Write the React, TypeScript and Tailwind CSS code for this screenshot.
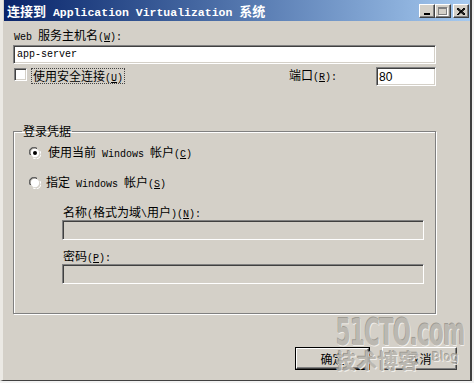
import React from 'react';

const latinCls = "font-['Liberation_Mono',monospace] text-[10px]";
const titleLatinCls = "font-['Liberation_Mono',monospace] text-[11.5px] font-bold";

// splits a label into CJK and latin runs; "&X" underlines X (accelerator key)
function Txt({ s, latin = latinCls }: { s: string; latin?: string }) {
  const parts = s.split(/([\x20-\x7e]+)/).filter(Boolean);
  return (
    <>
      {parts.map((p, i) => {
        if (!/^[\x20-\x7e]+$/.test(p)) return <span key={i}>{p}</span>;
        const bits = p.split(/&(.)/);
        return (
          <span key={i} className={latin + ' whitespace-pre'}>
            {bits.map((b, j) => (j % 2 ? <span key={j} className="underline">{b}</span> : b))}
          </span>
        );
      })}
    </>
  );
}

const sunken =
  'border border-t-[#808080] border-l-[#808080] border-b-white border-r-white shadow-[inset_1px_1px_0_#404040,inset_-1px_-1px_0_#d4d0c8]';

function Radio({ checked }: { checked?: boolean }) {
  return (
    <svg width="12" height="12" viewBox="0 0 12 12" className="shrink-0">
      <path d="M1 8 A5 5 0 0 1 8 1" fill="none" stroke="#808080" strokeWidth="1" />
      <path d="M2 8 A4 4 0 0 1 8 2" fill="none" stroke="#404040" strokeWidth="1" />
      <circle cx="6" cy="6" r="4.2" fill="#fff" />
      <path d="M4 11 A5 5 0 0 0 11 4" fill="none" stroke="#fff" strokeWidth="1" />
      {checked && <circle cx="6" cy="6" r="2" fill="#000" />}
    </svg>
  );
}

function CaptionBtn({ children }: { children: React.ReactNode }) {
  return (
    <div className="w-[16px] h-[14px] bg-[#d4d0c8] border border-t-white border-l-white border-b-[#404040] border-r-[#404040] shadow-[inset_-1px_-1px_0_#808080] flex items-center justify-center">
      {children}
    </div>
  );
}

function Button({ label, isDefault }: { label: string; isDefault?: boolean }) {
  return (
    <div
      className={
        isDefault
          ? 'w-[75px] h-[23px] border border-black bg-[#d4d0c8] flex'
          : 'w-[75px] h-[23px] bg-[#d4d0c8] flex'
      }
    >
      <div className="flex-1 flex items-center justify-center border border-t-white border-l-white border-b-[#404040] border-r-[#404040] shadow-[inset_-1px_-1px_0_#808080]">
        {label}
      </div>
    </div>
  );
}

export default function App() {
  return (
    <div className="w-[474px] h-[383px] bg-[#f2f2f2] relative overflow-hidden font-['Noto_Sans_CJK_SC',sans-serif] text-[12px] leading-[12px] text-black">
      <div className="w-[472px] h-[381px] pl-[4px] bg-[#d4d0c8] border-l-[3px] border-l-[#ebe9e4] border-r-2 border-r-[#404040] border-b border-b-[#404040] flex flex-col">
        {/* title bar */}
        <div className="h-[21px] shrink-0 -ml-[3px] pl-[3px] pr-[1px] flex items-center bg-gradient-to-r from-[#0a246a] to-[#a6caf0]">
          <div className="h-[14px] text-white text-[13px] font-bold leading-[14px] whitespace-nowrap">
            <Txt s="连接到 Application Virtualization 系统" latin={titleLatinCls} />
          </div>
          <div className="ml-auto flex items-center mt-[1px]">
            <CaptionBtn>
              <div className="w-[6px] h-[2px] bg-black mt-[6px] -ml-[1px]" />
            </CaptionBtn>
            <CaptionBtn>
              <div className="w-[9px] h-[8px] border border-[#808080] border-t-2 shadow-[1px_1px_0_#fff] -ml-[1px]" />
            </CaptionBtn>
            <div className="ml-[2px]">
              <CaptionBtn>
                <svg width="8" height="7" viewBox="0 0 8 7" className="-ml-[1px]">
                  <path d="M0 0 L8 7 M1 0 L8 6 M0 1 L7 7 M8 0 L0 7 M7 0 L0 7 M8 1 L1 7" stroke="#000" strokeWidth="1" />
                </svg>
              </CaptionBtn>
            </div>
          </div>
        </div>

        {/* body */}
        <div className="pl-[6px] pr-[34px] flex flex-col">
          <div className="mt-[8px] ml-[1px] h-[12px]">
            <Txt s="Web 服务主机名(&W):" />
          </div>
          <div className={'mt-[4px] h-[19px] bg-white flex items-center pl-[3px] ' + sunken}>
            <Txt s="app-server" />
          </div>

          <div className="mt-[3px] h-[19px] flex items-start">
            <div className={'mt-[1px] ml-[1px] w-[13px] h-[13px] bg-white ' + sunken} />
            <div className="ml-[4px] mt-[1px] h-[16px] px-[1px] py-[1px] border border-dotted border-[#444]">
              <Txt s="使用安全连接(&U)" />
            </div>
            <div className="ml-auto mt-[2px] mr-[39px] h-[12px]">
              <Txt s="端口(&R):" />
            </div>
            <div className={'w-[60px] h-[19px] bg-white flex items-center pl-[2px] ' + sunken}>
              <span className="font-['Liberation_Sans',sans-serif] text-[12px]">80</span>
            </div>
          </div>

          {/* group box */}
          <fieldset className="mt-[39px] h-[189px] border border-[#808080] shadow-[inset_1px_1px_0_#fff,1px_1px_0_#fff] flex flex-col">
            <legend className="ml-[8px] px-[1px] h-[12px] leading-[12px]">登录凭据</legend>
            <div className="mt-[10px] ml-[15px] h-[12px] flex items-center gap-[7px]">
              <Radio checked />
              <span>
                <Txt s="使用当前 Windows 帐户(&C)" />
              </span>
            </div>
            <div className="mt-[18px] ml-[15px] h-[12px] flex items-center gap-[5px]">
              <Radio />
              <span>
                <Txt s="指定 Windows 帐户(&S)" />
              </span>
            </div>
            <div className="ml-[48px] mr-[11px] flex flex-col">
              <div className="mt-[17px] ml-[1px] h-[12px]">
                <Txt s="名称(格式为域\用户)(&N):" />
              </div>
              <div className={'mt-[2px] h-[20px] bg-[#d4d0c8] ' + sunken} />
              <div className="mt-[10px] ml-[1px] h-[12px]">
                <Txt s="密码(&P):" />
              </div>
              <div className={'mt-[2px] h-[20px] bg-[#d4d0c8] ' + sunken} />
            </div>
          </fieldset>

          <div className="mt-[33px] flex justify-end gap-[12px] -mr-[21px]">
            <Button label="确定" isDefault />
            <Button label="取消" />
          </div>
        </div>
      </div>

      {/* 51CTO watermark */}
      <div className="absolute left-[336px] top-[314px] pointer-events-none text-[#b9b6af] [text-shadow:1px_1px_0_#f4f2ee,-1px_-1px_0_#9a978f] opacity-90">
        <div className="font-['DejaVu_Sans_Condensed',sans-serif] font-bold text-[38px] leading-[36px] tracking-[-1px] scale-x-[0.62] origin-left whitespace-nowrap">
          51CTO.com
        </div>
        <div className="flex items-end">
          <span className="text-[20px] leading-[22px] font-bold tracking-[1px]">技术博客</span>
          <span className="ml-[12px] font-['DejaVu_Sans',sans-serif] text-[12px] leading-[14px] mb-[8px]">Blog</span>
        </div>
      </div>
    </div>
  );
}
